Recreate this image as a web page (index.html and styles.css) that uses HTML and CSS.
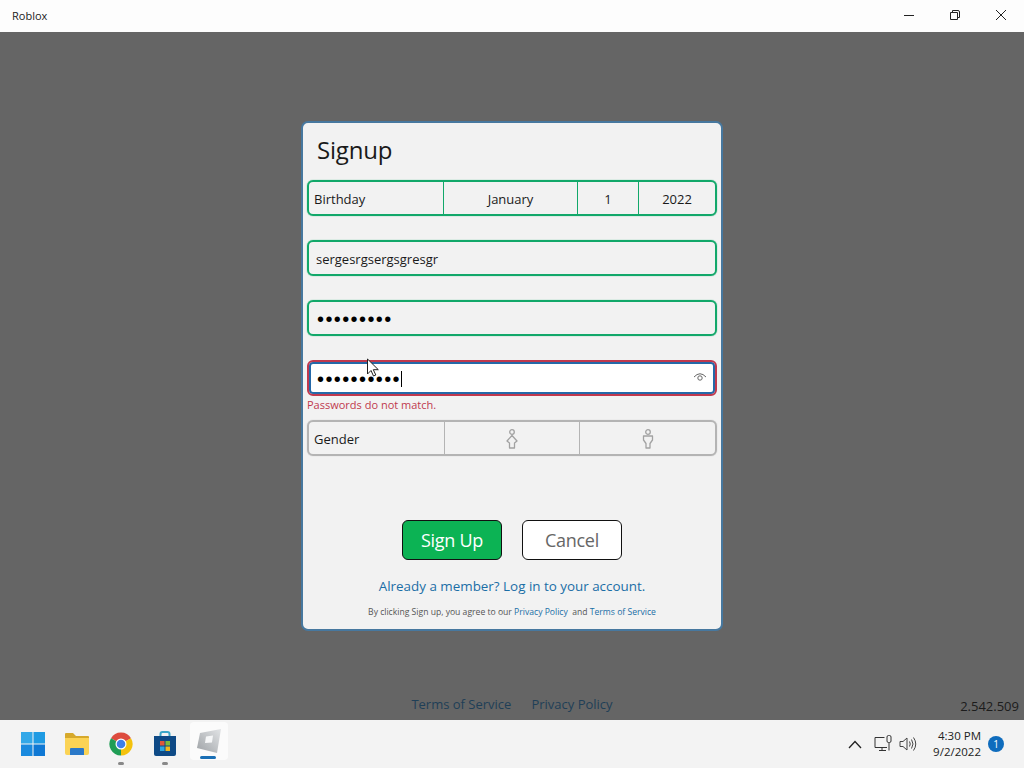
FILE: index.html
```html
<!DOCTYPE html>
<html lang="en">
<head>
<meta charset="utf-8">
<title>Roblox</title>
<link rel="stylesheet" href="styles.css">
</head>
<body>
<div class="app">
  <header class="titlebar">
    <span class="app-name">Roblox</span>
    <div class="win-controls">
      <span class="win-btn"><svg width="12" height="12" viewBox="0 0 12 12"><path d="M1 6.500h10" stroke="#222" fill="none"/></svg></span>
      <span class="win-btn"><svg width="12" height="12" viewBox="0 0 12 12"><path d="M1.500 3.500h7v7h-7zM3.500 3.500v-2h5.500q1.500 0 1.500 1.500v5.500h-2" stroke="#222" fill="none"/></svg></span>
      <span class="win-btn"><svg width="12" height="12" viewBox="0 0 12 12"><path d="M1 1l10 10M11 1L1 11" stroke="#222" fill="none"/></svg></span>
    </div>
  </header>
  <main class="stage">
    <section class="modal">
      <h1 class="modal-title">Signup</h1>
      <div class="seg-row ok">
        <span class="seg seg-label seg-b1">Birthday</span>
        <span class="seg seg-b2">January</span>
        <span class="seg seg-b3">1</span>
        <span class="seg seg-b4">2022</span>
      </div>
      <div class="field ok"><span class="field-text">sergesrgsergsgresgr</span></div>
      <div class="field ok"><span class="dots">•••••••••</span></div>
      <div class="field bad">
        <span class="dots">••••••••••</span><span class="caret"></span>
        <svg class="eye" width="14" height="12" viewBox="0 0 14 12"><path d="M1 6q6-6.500 12 0" stroke="#666" fill="none"/><circle cx="7" cy="7" r="2.200" stroke="#666" fill="none"/></svg>
      </div>
      <p class="error">Passwords do not match.</p>
      <div class="seg-row neutral">
        <span class="seg seg-label seg-g1">Gender</span>
        <span class="seg seg-g2"><svg width="12" height="20" viewBox="0 0 12 20"><g stroke="#a2a2a2" stroke-width="1.300" fill="none" stroke-linejoin="round"><circle cx="6" cy="3" r="2.300"/><path d="M6 6.500L1 12l2.500 2v5h5v-5L11 12z"/></g></svg></span>
        <span class="seg seg-g3"><svg width="12" height="20" viewBox="0 0 12 20"><g stroke="#a2a2a2" stroke-width="1.300" fill="none" stroke-linejoin="round"><circle cx="6" cy="3" r="2.300"/><path d="M1.500 7h9v4L8 14.500V19H4v-4.500L1.500 11z"/></g></svg></span>
      </div>
      <div class="actions">
        <span class="btn btn-primary">Sign Up</span>
        <span class="btn btn-secondary">Cancel</span>
      </div>
      <a class="login-link">Already a member? Log in to your account.</a>
      <p class="legal">By clicking Sign up, you agree to our <a class="legal-link">Privacy Policy</a>&nbsp; and <a class="legal-link">Terms of Service</a></p>
    </section>
    <div class="stage-foot">
      <a class="foot-link">Terms of Service</a>
      <a class="foot-link">Privacy Policy</a>
      <span class="version">2.542.509</span>
    </div>
    <svg class="cursor" width="14" height="20" viewBox="0 0 14 20"><path d="M1.500 1v15l3.500-3.500 2.500 5.500 2.300-1-2.500-5.300h5z" fill="#fff" stroke="#222"/></svg>
  </main>
  <footer class="taskbar">
    <div class="task-icons">
      <span class="task-item"><svg width="24" height="24" viewBox="0 0 24 24"><path d="M0 0h11.500v11.500H0z" fill="#33a8e8"/><path d="M12.500 0H24v11.500H12.500z" fill="#1f9be3"/><path d="M0 12.500h11.500V24H0z" fill="#1a8ade"/><path d="M12.500 12.500H24V24H12.500z" fill="#0f78d4"/></svg></span>
      <span class="task-item"><svg width="26" height="24" viewBox="0 0 26 24"><path d="M1 2q0-1 1-1h7l3 3h12q1 0 1 1v3H1z" fill="#d6a92c"/><path d="M1 6h24v15q0 2-2 2H3q-2 0-2-2z" fill="#fbd355"/><path d="M6 23v-6q0-1 1-1h12q1 0 1 1v6z" fill="#2a78c8"/></svg></span>
      <span class="task-item running"><svg width="24" height="24" viewBox="0 0 24 24"><path d="M12 12L2 6.200A11.500 11.500 0 0 1 22 6.200z" fill="#dd4b3e"/><path d="M12 12L22 6.200A11.500 11.500 0 0 1 12 23.500z" fill="#f4c20d"/><path d="M12 12v11.500A11.500 11.500 0 0 1 2 6.200z" fill="#1f9d55"/><circle cx="12" cy="12" r="5.500" fill="#fff"/><circle cx="12" cy="12" r="4.300" fill="#3f7fe8"/></svg></span>
      <span class="task-item running"><svg width="24" height="26" viewBox="0 0 24 26"><path d="M7.500 6V3q0-2 2-2h5q2 0 2 2v3" stroke="#3aa6c8" stroke-width="2" fill="none"/><path d="M1 5h22v18q0 2-2 2H3q-2 0-2-2z" fill="#0e4a86"/><path d="M7 10h4.500v4.500H7z" fill="#e0563a"/><path d="M12.500 10H17v4.500h-4.500z" fill="#7eb93c"/><path d="M7 15.500h4.500V20H7z" fill="#2ca6e0"/><path d="M12.500 15.500H17V20h-4.500z" fill="#f2b91d"/></svg></span>
      <span class="task-item active"><svg width="26" height="26" viewBox="0 0 26 26"><defs><linearGradient id="rbx" x1="0" y1="1" x2="1" y2="0"><stop offset="0" stop-color="#9ea2a6"/><stop offset="1" stop-color="#e2e4e6"/></linearGradient></defs><path d="M4 5L25 1l-4 24-20-5z" fill="url(#rbx)"/><path d="M10 8.500l7-1-1 7-7 .5z" fill="#f6f7f8"/></svg></span>
    </div>
    <div class="tray">
      <svg class="tray-chevron" width="14" height="9" viewBox="0 0 14 9"><path d="M1 8l6-6.500L13 8" stroke="#222" stroke-width="1.300" fill="none"/></svg>
      <svg class="tray-net" width="18" height="18" viewBox="0 0 18 18"><path d="M10.500 2.500H1v10h12M5 15.500h7M8 12.500v3" stroke="#333" fill="none"/><rect x="13" y="0.500" width="4" height="7" rx="1.500" stroke="#333" fill="none"/><path d="M15 7.500v8" stroke="#333"/></svg>
      <svg class="tray-sound" width="18" height="16" viewBox="0 0 18 16"><path d="M1 5.500h3L8 2v12L4 10.500H1zM10.500 5.500q1.500 2.500 0 5M12.500 3.500q3 4.500 0 9M14.500 1.500q4.500 6.500 0 13" stroke="#444" fill="none"/></svg>
      <div class="clock"><span>4:30 PM</span><span>9/2/2022</span></div>
      <span class="badge">1</span>
    </div>
  </footer>
</div>
</body>
</html>
```
FILE: styles.css
```css
* { box-sizing: border-box; }
html, body { margin: 0; padding: 0; }
body { font-family: "Open Sans", "Noto Sans", "Liberation Sans", sans-serif; color: #1a1a1a; }
.app { width: 1024px; height: 768px; display: flex; flex-direction: column; overflow: hidden; }

.titlebar { height: 32px; flex: none; background: #fdfdfd; display: flex; align-items: center; justify-content: space-between; padding: 0 0 2px 12px; }
.app-name { font-size: 11px; color: #222; }
.win-controls { display: flex; }
.win-btn { width: 46px; height: 32px; display: flex; align-items: center; justify-content: center; }

.stage { flex: 1; position: relative; background: #656565; display: grid; grid-template-rows: 1fr auto 1fr; justify-items: center; }
.modal { grid-row: 2; width: 422px; height: 510px; background: #f2f2f2; border: 2px solid #47789f; border-radius: 7px; padding: 0 4px; display: flex; flex-direction: column; }
.modal-title { margin: 10px 0 14px 10px; height: 33px; font-size: 24px; line-height: 33px; font-weight: 400; letter-spacing: -0.2px; color: #1a1a1a; }

.seg-row { height: 36px; border: 2px solid; border-radius: 6px; display: flex; flex: none; font-size: 13px; }
.seg-row.ok { border-color: #12a86a; box-shadow: 0 0 1px #12a86a; }
.seg-row.neutral { border-color: #b4b4b4; box-shadow: 0 0 1px #b4b4b4; margin-top: 6px; }
.seg { display: flex; align-items: center; justify-content: center; border-left: 1px solid; border-color: inherit; padding-top: 1px; }
.seg-label { justify-content: flex-start; padding-left: 5px; border-left: 0; }
.seg-b1 { width: 134px; }
.seg-b2 { width: 134px; }
.seg-b3 { width: 61px; }
.seg-b4 { flex: 1; }
.seg-g1 { width: 135px; }
.seg-g2 { width: 135px; }
.seg-g3 { flex: 1; }

.field { height: 36px; flex: none; margin-top: 24px; border: 2px solid; border-radius: 6px; display: flex; align-items: center; padding: 1px 0 0 7px; position: relative; font-size: 13px; }
.field.ok { border-color: #12a86a; box-shadow: 0 0 1px #12a86a; }
.field.bad { border-color: #c0394e; box-shadow: inset 0 0 0 2px #2569a8; background: #fff; }
.dots { font-family: "Liberation Sans", sans-serif; font-size: 20px; letter-spacing: 1.400px; color: #000; line-height: 1; margin-left: 1px; }
.caret { width: 1px; height: 16px; background: #000; }
.eye { position: absolute; right: 8px; top: 9px; }
.error { margin: 0; height: 18px; font-size: 11px; line-height: 18px; color: #c0394e; }

.actions { display: flex; justify-content: center; gap: 20px; margin-top: 64px; }
.btn { width: 100px; height: 40px; border: 1px solid #111; border-radius: 6px; display: flex; align-items: center; justify-content: center; font-size: 18px; letter-spacing: -0.300px; }
.btn-primary { background: #0cb354; color: #fff; }
.btn-secondary { background: #fff; color: #666; }
.login-link { margin-top: 16px; text-align: center; font-size: 13.400px; line-height: 20px; color: #1a6ea6; }
.legal { margin: 9px 0 0; text-align: center; font-size: 8.600px; line-height: 14px; color: #555; }
.legal-link { color: #1a6ea6; }

.stage-foot { grid-row: 3; align-self: end; justify-self: stretch; position: relative; height: 32px; display: flex; justify-content: center; align-items: center; gap: 20px; font-size: 13px; }
.foot-link { color: #1f3f57; }
.version { position: absolute; right: 5px; top: 9px; color: #1c1c1c; }
.cursor { position: absolute; left: 366px; top: 326px; }

.taskbar { height: 48px; flex: none; background: #f3f3f3; display: flex; justify-content: space-between; align-items: center; padding: 0 20px 0 11px; }
.task-icons { display: flex; }
.task-item { width: 44px; height: 44px; display: flex; align-items: center; justify-content: center; position: relative; border-radius: 4px; }
.task-item.running::after, .task-item.active::after { content: ""; position: absolute; bottom: 1px; left: 19px; width: 6px; height: 3px; border-radius: 2px; background: #888; }
.task-item.active { background: #fbfbfb; width: 38px; height: 38px; margin-left: 3px; }
.task-item.active::after { left: 10px; width: 16px; background: #1a6fb5; }
.tray { display: flex; align-items: center; }
.tray-chevron { margin-right: 12px; }
.tray-net { margin-right: 7px; }
.tray-sound { margin-right: 16px; }
.clock { display: flex; flex-direction: column; align-items: flex-end; font-size: 11.500px; line-height: 16px; color: #222; }
.badge { width: 16px; height: 16px; border-radius: 50%; margin-left: 7px; background: #0f6cbd; color: #fff; font-size: 10px; display: flex; align-items: center; justify-content: center; }
```
